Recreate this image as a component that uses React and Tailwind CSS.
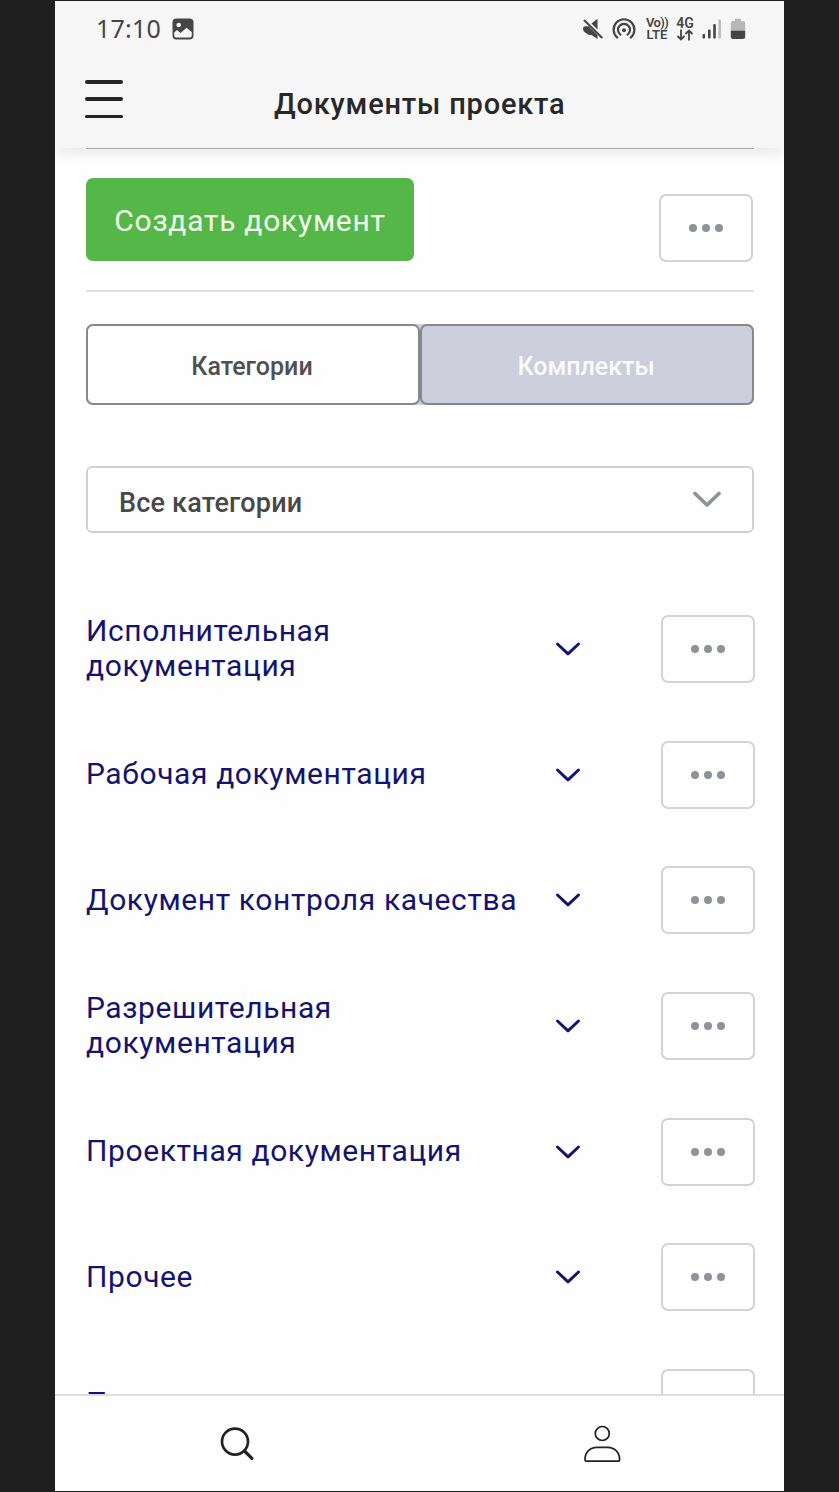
const categories = [
  'Исполнительная документация',
  'Рабочая документация',
  'Документ контроля качества',
  'Разрешительная документация',
  'Проектная документация',
  'Прочее',
  'Приказы',
];

function StatusBar() {
  return (
    <div className="flex h-[55px] shrink-0 items-center pr-[38px] pl-[41px] text-[#454545]">
      <span className="font-['Noto_Sans',sans-serif] text-[25px] leading-none tracking-[0.2px]">17:10</span>
      <svg className="ml-[11px]" width="22" height="22" viewBox="0 0 22 22">
        <rect x="0.5" y="0.5" width="21" height="21" rx="4" fill="currentColor" />
        <circle cx="6.7" cy="7" r="2.3" fill="#f6f6f6" />
        <path d="M2.2 14.5 5 12l3.5 3 6-5.2 5.3 4.2v3.5q0 2-2 2H4.2q-2 0-2-2z" fill="#f6f6f6" />
      </svg>

      {/* muted speaker */}
      <svg className="ml-auto" width="22" height="22" viewBox="0 0 22 22" fill="currentColor">
        <path d="M1 10.5Q1 8.2 3.500 8.200H6.500L15.500 17v4L9.500 17H7L3 14.500Q1 13 1 10.500z" />
        <path d="M9.500 5.600 15.500 .8v10.600z" />
        <path d="M2 2 20.300 20" stroke="currentColor" strokeWidth="2" />
      </svg>
      <svg className="ml-[8px]" width="24" height="22" viewBox="0 0 24 22" fill="none" stroke="currentColor" strokeWidth="2.2" strokeLinecap="round">
        <path d="M5.3 19.6a10.400 10.400 0 1 1 13.400 0" />
        <path d="M8.400 16.600a6 6 0 1 1 7.200 0" />
        <circle cx="12" cy="12.200" r="2" fill="currentColor" stroke="none" />
      </svg>
      <div className="ml-[10px] flex w-[22px] flex-col items-center font-['Roboto',sans-serif] text-[13px] leading-[12px] font-semibold whitespace-nowrap">
        <span className="tracking-[-0.6px]">Vo))</span>
        <span>LTE</span>
      </div>
      <div className="ml-[8px] flex w-[18px] flex-col items-center font-['Roboto',sans-serif] text-[14px] leading-[12px] font-semibold">
        <span>4G</span>
        <svg width="18" height="12" viewBox="0 0 18 12" fill="none" stroke="currentColor" strokeWidth="1.8">
          <path d="M5 .5v10M1.500 7 5 10.500 8.500 7M13 11.500v-10M9.500 5 13 1.500 16.500 5" />
        </svg>
      </div>
      <svg className="ml-[8px]" width="20" height="20" viewBox="0 0 20 20" fill="currentColor">
        <rect x="0.5" y="15" width="2.6" height="4.5" rx="1" />
        <rect x="6" y="10.5" width="2.6" height="9" rx="1" />
        <rect x="11.2" y="5" width="2.6" height="14.5" rx="1" />
        <rect x="16.5" y="0.5" width="2.4" height="19" rx="1" fill="#b8b8b8" />
      </svg>
      <svg className="ml-[8px]" width="16" height="22" viewBox="0 0 16 22">
        <path d="M5 .8h6V3h2q2.2 0 2.2 2v8H.8V5Q.8 3 3 3h2z" fill="#b8b8b8" />
        <path d="M.8 12.800h14.400v5.700q0 2.500-2.500 2.500H3.300q-2.500 0-2.500-2.500z" fill="currentColor" />
      </svg>
    </div>
  );
}

function Header() {
  return (
    <header className="z-10 h-[147px] shrink-0 bg-[#f6f6f6] shadow-[0_4px_14px_rgba(0,0,0,0.1)]">
      <StatusBar />
      <div className="flex h-[92px] pl-[30px]">
        <button className="mt-[24px] flex h-[38px] w-[38px] flex-col justify-between" aria-label="Меню">
          <span className="h-[3.5px] w-full rounded-full bg-[#252525]" />
          <span className="h-[3.5px] w-full rounded-full bg-[#252525]" />
          <span className="h-[3.5px] w-full rounded-full bg-[#252525]" />
        </button>
        <h1 className="mt-[32px] ml-[151px] text-[29px] leading-[32px] font-medium tracking-[0.8px] whitespace-nowrap text-[#282828]">
          Документы проекта
        </h1>
      </div>
    </header>
  );
}

function MoreButton() {
  return (
    <button className="flex h-[68px] w-[94px] shrink-0 items-center justify-center gap-[5px] rounded-[7px] border-2 border-[#d3d3d5]" aria-label="Ещё">
      <span className="size-[8px] rounded-full bg-[#8f9299]" />
      <span className="size-[8px] rounded-full bg-[#8f9299]" />
      <span className="size-[8px] rounded-full bg-[#8f9299]" />
    </button>
  );
}

function CategoryRow({ name }) {
  return (
    <div className="flex h-[125.7px] shrink-0 items-center">
      <div className="w-[469px]">
        <p className="max-w-[440px] text-[30px] leading-[34.5px] tracking-[0.6px] text-[#14146f]">{name}</p>
      </div>
      <svg width="26" height="16" viewBox="0 0 26 16" fill="none" stroke="#14146f" strokeWidth="3" strokeLinecap="round" strokeLinejoin="round">
        <path d="M2.5 3 13 12.800 23.500 3" />
      </svg>
      <div className="ml-auto">
        <MoreButton />
      </div>
    </div>
  );
}

function BottomNav() {
  return (
    <nav className="flex h-[97px] shrink-0 border-t-2 border-[#dcdede] bg-[#fefefe] text-[#222]">
      <button className="flex flex-1 items-center justify-center" aria-label="Поиск">
        <svg width="36" height="36" viewBox="0 0 36 36" fill="none" stroke="currentColor" strokeLinecap="round">
          <circle cx="16" cy="15.6" r="13" strokeWidth="2.7" />
          <path d="m25.5 25 7.400 7.400" strokeWidth="3.2" />
        </svg>
      </button>
      <button className="flex flex-1 items-center justify-center" aria-label="Профиль">
        <svg width="38" height="38" viewBox="0 0 38 38" fill="none" stroke="currentColor" strokeWidth="1.7">
          <circle cx="19.3" cy="8.5" r="7" />
          <path d="M2 34.500C2 27 7.300 22.300 13.800 22.300h11C31.300 22.300 36.600 27 36.600 34.500q0 1.700-1.700 1.700H3.700q-1.700 0-1.700-1.700z" />
        </svg>
      </button>
    </nav>
  );
}

export default function App() {
  return (
    <div className="flex h-[1492px] w-[839px] justify-center bg-[#1f1f1f] py-px font-['Roboto',sans-serif]">
      <div className="flex w-[729px] flex-col overflow-hidden bg-[#fefefe]">
        <Header />

        <main className="flex min-h-0 flex-1 flex-col overflow-hidden pr-[29px] pl-[31px]">
          <div className="mr-[1px] flex h-[144px] shrink-0 items-start justify-between border-t border-b-2 border-t-[#b4b4b4] border-b-[#dedede] pt-[29px]">
            <button className="h-[83px] w-[328px] rounded-[7px] bg-[#55b748] pt-px text-[30px] tracking-[0.73px] whitespace-nowrap text-[#f0fbee]">
              Создать документ
            </button>
            <div className="mt-[16px] mr-px">
              <MoreButton />
            </div>
          </div>

          <div className="mt-[32px] mr-[1px] flex h-[81px] shrink-0 rounded-[7px] bg-[#cccfdb] text-[25px] font-medium">
            <button className="flex-1 rounded-[7px] border-2 border-[#85888e] bg-[#fefefe] pt-[4px] pr-[2px] text-[#505050]">
              Категории
            </button>
            <button className="flex-1 rounded-[7px] border-2 border-[#85888e] pt-[4px] pr-[2px] text-[#fafafa]">
              Комплекты
            </button>
          </div>

          <button className="mt-[61px] mr-[1px] flex h-[67px] shrink-0 items-center justify-between rounded-[6px] border-2 border-[#cfd0d2] pr-[29px] pl-[31px]">
            <span className="pt-[7px] text-[27px] font-medium tracking-[0.2px] text-[#484848]">Все категории</span>
            <svg width="32" height="20" viewBox="0 0 32 20" fill="none" stroke="#8f9299" strokeWidth="3.8" strokeLinecap="round" strokeLinejoin="round">
              <path d="M4 3.5 16 15 28 3.5" />
            </svg>
          </button>

          <div className="mt-[53px] flex flex-col">
            {categories.map((name) => (
              <CategoryRow key={name} name={name} />
            ))}
          </div>
        </main>

        <BottomNav />
      </div>
    </div>
  );
}
